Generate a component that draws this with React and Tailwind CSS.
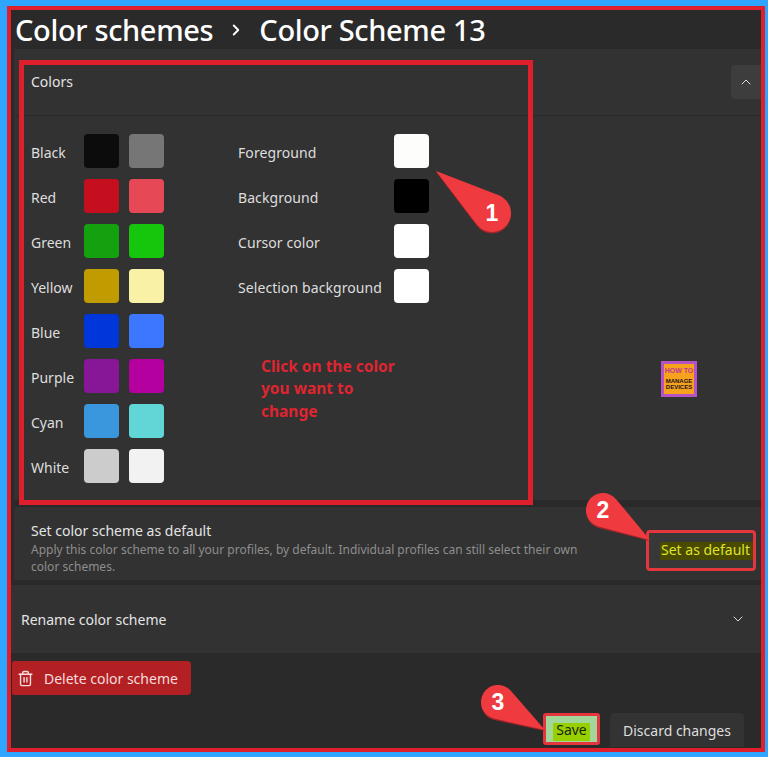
import { ChevronUp, ChevronDown, ChevronRight, Trash2 } from "lucide-react"

const rows = [
  ["Black", "bg-[#0c0c0c]", "bg-[#767676]"],
  ["Red", "bg-[#c50f1f]", "bg-[#e74856]"],
  ["Green", "bg-[#13a10e]", "bg-[#16c60c]"],
  ["Yellow", "bg-[#c19c00]", "bg-[#f9f1a5]"],
  ["Blue", "bg-[#0037da]", "bg-[#3b78ff]"],
  ["Purple", "bg-[#881798]", "bg-[#b4009e]"],
  ["Cyan", "bg-[#3a96dd]", "bg-[#61d6d6]"],
  ["White", "bg-[#cccccc]", "bg-[#f2f2f2]"],
]

const others = [
  ["Foreground", "bg-[#fdfdfb]"],
  ["Background", "bg-[#000000]"],
  ["Cursor color", "bg-[#ffffff]"],
  ["Selection background", "bg-[#ffffff]"],
]

function Swatch({ color }) {
  return <div className={`w-[35px] h-[34px] rounded-[4px] ${color}`} />
}

function tear(tx, ty, cx, cy, r) {
  const d = Math.hypot(cx - tx, cy - ty)
  const base = Math.atan2(ty - cy, tx - cx)
  const off = Math.acos(r / d)
  const p1 = [cx + r * Math.cos(base - off), cy + r * Math.sin(base - off)]
  const p2 = [cx + r * Math.cos(base + off), cy + r * Math.sin(base + off)]
  return `M${tx} ${ty}L${p2[0]} ${p2[1]}A${r} ${r} 0 1 1 ${p1[0]} ${p1[1]}Z`
}

function Callout({ tx, ty, cx, cy, r, n }) {
  return (
    <g>
      <path d={tear(tx, ty + 1, cx, cy + 1.5, r)} fill="#a3242a" />
      <path d={tear(tx, ty, cx, cy, r)} fill="#ef3b3f" />
      <text x={cx} y={cy + 8} textAnchor="middle" fontSize="23" fontWeight="700" fill="#ffffff" fontFamily="'Liberation Sans', sans-serif">{n}</text>
    </g>
  )
}

export default function App() {
  return (
    <div className="relative w-[768px] h-[757px] bg-[#2ea6ff] pt-[6px] pl-[7px] pr-[3px] pb-[5px] overflow-hidden font-['Noto_Sans',sans-serif]">
      <div className="h-full border-[4px] border-[#e01f2d] bg-[#2a2a2a] flex flex-col">
        <div className="h-[39px] shrink-0 flex items-center pl-[4px] text-[29px] font-medium text-white tracking-[-0.35px]">
          <span>Color schemes</span>
          <ChevronRight className="w-[18px] h-[18px] mx-[14px]" strokeWidth={2.5} />
          <span>Color Scheme 13</span>
        </div>

        <div className="ml-[3px] h-[451px] shrink-0 bg-[#323232]">
          <div className="h-[67px] border-b border-[#2a2a2a] flex items-center justify-between pl-[17px]">
            <span className="text-[14px] pb-[2px] text-[#e4e4e4]">Colors</span>
            <div className="w-[30px] h-[34px] rounded-l-[4px] bg-[#3d3d3d] flex items-center justify-center">
              <ChevronUp className="w-[16px] h-[16px] text-[#dcdcdc]" strokeWidth={1.5} />
            </div>
          </div>
          <div className="flex pt-[18px] pl-[17px]">
            <div className="flex flex-col gap-[11px]">
              {rows.map(([name, dark, light]) => (
                <div key={name} className="flex items-center">
                  <span className="w-[53px] pt-[2px] text-[14px] text-[#dedede]">{name}</span>
                  <Swatch color={dark} />
                  <div className="w-[10px]" />
                  <Swatch color={light} />
                </div>
              ))}
            </div>
            <div className="flex flex-col gap-[11px] ml-[74px]">
              {others.map(([name, color]) => (
                <div key={name} className="flex items-center">
                  <span className="w-[156px] pt-[2px] text-[14px] tracking-[0.08px] text-[#dedede]">{name}</span>
                  <Swatch color={color} />
                </div>
              ))}
            </div>
          </div>
        </div>

        <div className="mt-[7px] ml-[3px] h-[73px] shrink-0 bg-[#323232] flex items-start justify-between pl-[17px] pr-[5px] pt-[14px]">
          <div className="w-[570px]">
            <p className="text-[14px] leading-[20px] text-[#e4e4e4]">Set color scheme as default</p>
            <p className="text-[12px] leading-[17px] text-[#8e8e8e]">
              Apply this color scheme to all your profiles, by default. Individual profiles can still select their own color schemes.
            </p>
          </div>
          <div className="mt-[9px] w-[110px] h-[41px] border-[3px] border-[#e5353d] rounded-[4px] bg-[#383838] flex items-center justify-end">
            <span className="bg-[#4a4a00] h-[18px] leading-[16px] pl-[1px] pr-[3px] text-[14px] text-[#dfe32a] whitespace-nowrap">Set as default</span>
          </div>
        </div>

        <div className="mt-[5px] h-[68px] shrink-0 bg-[#323232] flex items-center justify-between pl-[10px] pr-[15px]">
          <span className="text-[14px] text-[#e4e4e4]">Rename color scheme</span>
          <ChevronDown className="w-[16px] h-[16px] text-[#dcdcdc]" strokeWidth={1.5} />
        </div>

        <div className="mt-[8px] ml-[1px] w-[179px] h-[34px] shrink-0 bg-[#b32024] rounded-r-[4px] rounded-l-[2px] flex items-center pl-[5px] gap-[10px] text-[14px] text-[#f6dcdc]">
          <Trash2 className="w-[17px] h-[17px]" strokeWidth={2} />
          <span>Delete color scheme</span>
        </div>

        <div className="mt-[18px] h-[34px] shrink-0 flex items-start justify-end pr-[17px] gap-[10px]">
          <div className="w-[57px] h-[32px] border-[3px] border-[#e5353d] rounded-[3px] bg-[#a3d69b] flex items-end justify-center">
            <span className="bg-[#98cf00] px-[3px] h-[18px] leading-[14px] mb-[1px] text-[14px] text-[#16260a]">Save</span>
          </div>
          <div className="w-[134px] h-[34px] rounded-t-[4px] bg-[#333333] flex items-center justify-center text-[14px] text-[#dedede]">Discard changes</div>
        </div>
      </div>

      <div className="absolute left-[19px] top-[60px] w-[514px] h-[445px] border-[5px] border-[#e01f2d]" />

      <div className="absolute left-[261px] top-[355px] w-[150px] text-[15.5px] leading-[22.4px] font-bold text-[#df2530]">
        Click on the color you want to change
      </div>

      <div className="absolute left-[661px] top-[361px] w-[36px] h-[36px] bg-[#f6a21c] border-[3px] border-[#b552c4] flex flex-col items-center font-['Liberation_Sans',sans-serif] font-bold leading-none">
        <span className="text-[7px] text-[#c2359a] mt-[3px] whitespace-nowrap">HOW TO</span>
        <span className="text-[6px] text-[#1c1020] mt-[4px]">MANAGE</span>
        <span className="text-[6px] text-[#1c1020]">DEVICES</span>
      </div>

      <svg className="absolute inset-0 pointer-events-none" width="768" height="757" viewBox="0 0 768 757">
        <Callout tx={436} ty={171} cx={492} cy={213} r={19} n="1" />
        <Callout tx={650} ty={540} cx={603} cy={510} r={17} n="2" />
        <Callout tx={545} ty={730} cx={498} cy={702} r={17} n="3" />
      </svg>
    </div>
  )
}
